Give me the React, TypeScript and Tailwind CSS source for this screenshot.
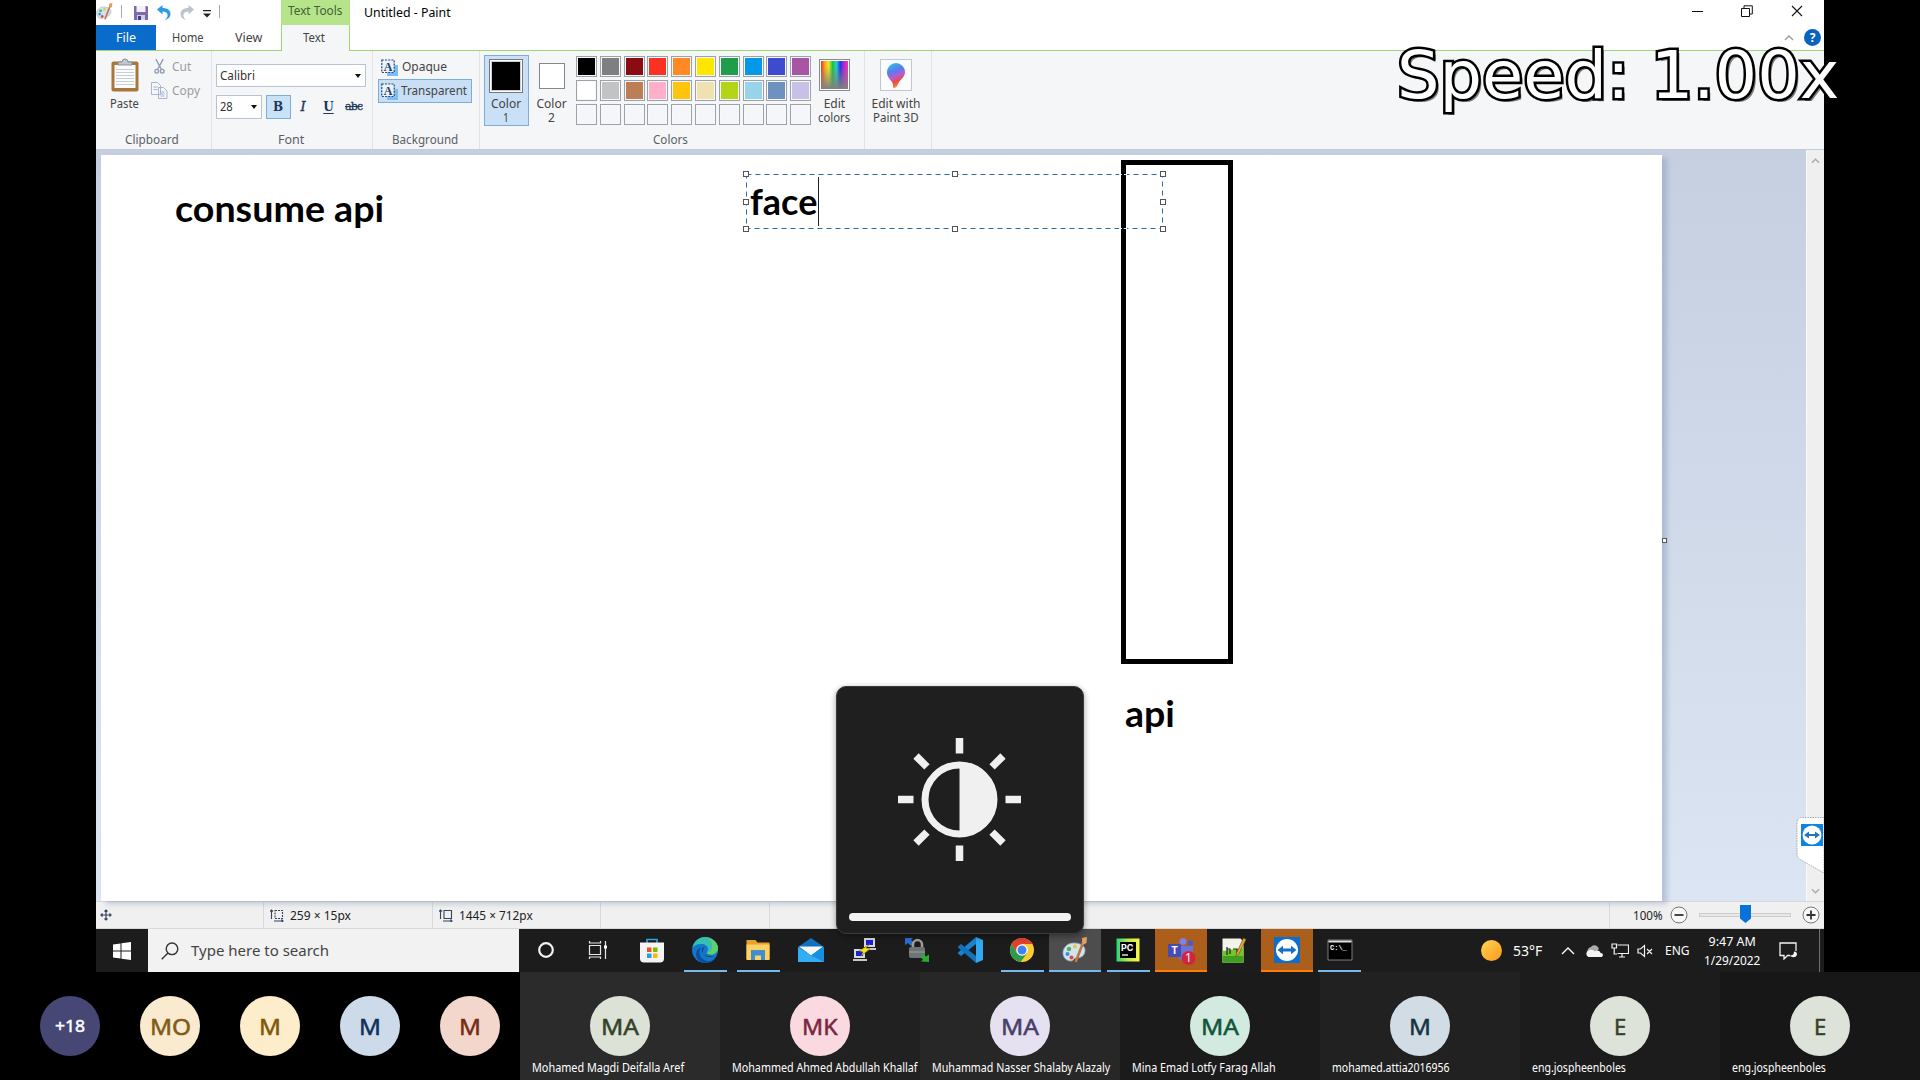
import React, { useLayoutEffect, useRef, useState } from "react";

/* A single line of text condensed or widened to an exact width. */
function Fit({ w, className = "", children }: { w: number; className?: string; children: string }) {
  const ref = useRef<HTMLSpanElement>(null);
  const [scale, setScale] = useState(1);
  useLayoutEffect(() => {
    if (ref.current && ref.current.offsetWidth) {
      setScale(w / ref.current.offsetWidth);
    }
  }, []);
  return (
    <span className={"block shrink-0 whitespace-nowrap " + className} style={{ width: w }}>
      <span ref={ref} className="inline-block origin-left" style={{ transform: `scaleX(${scale})` }}>
        {children}
      </span>
    </span>
  );
}

const paletteRows = [
  ["bg-black", "bg-[#7f7f7f]", "bg-[#8a0b14]", "bg-[#fb3123]", "bg-[#ff8a24]", "bg-[#ffe600]", "bg-[#1f9d4b]", "bg-[#0597ea]", "bg-[#3f4bcf]", "bg-[#a855a4]"],
  ["bg-white", "bg-[#c3c3c3]", "bg-[#bc7e55]", "bg-[#ffb0c8]", "bg-[#ffc40c]", "bg-[#efe2b0]", "bg-[#b4d517]", "bg-[#97d4ea]", "bg-[#6e91c0]", "bg-[#c8c0e7]"],
  Array(10).fill("bg-[#f4f6f9]"),
];

function PaintIcon({ className }: { className: string }) {
  return (
    <svg viewBox="0 0 26 26" className={className}>
      <path d="M12 6C5 6 1 11 1 16c0 5 4 8 8 8 3 0 2-3 5-3 6 0 9-3 9-8 0-4-5-7-11-7z" fill="#cfe3f0" stroke="#8fb4cc" strokeWidth=".8" />
      <circle cx="7" cy="12" r="2.200" fill="#58b04e" />
      <circle cx="13" cy="9.500" r="2" fill="#f0c53a" />
      <circle cx="5.500" cy="17" r="2" fill="#3b8edb" />
      <circle cx="9.500" cy="20.500" r="2" fill="#e0473c" />
      <path d="M22.500 2 14 24" stroke="#c1763a" strokeWidth="2.600" strokeLinecap="round" />
      <path d="M20 1l5-1-.5 6-4 2z" fill="#e0a163" />
    </svg>
  );
}

function TeamViewerIcon({ className }: { className: string }) {
  return (
    <svg viewBox="0 0 26 26" className={className}>
      <rect width="26" height="26" fill="#0b6fcf" />
      <circle cx="13" cy="13" r="11" fill="#fff" />
      <path d="M3.500 13 9 8.800v2.800h8V8.800l5.500 4.200-5.500 4.200v-2.800H9v2.800z" fill="#1570c8" />
    </svg>
  );
}

function Caret({ className = "" }: { className?: string }) {
  return <svg viewBox="0 0 6 4" className={"h-1 w-1.5 " + className}><path d="M0 0h6L3 4z" fill="#111" /></svg>;
}

function TitleBar() {
  return (
    <div className="flex h-[25px] bg-white">
      <div className="flex w-[185px] items-start pt-[3px]">
        <PaintIcon className="h-[17px] w-[17px]" />
        <i className="mt-[2px] ml-[8px] h-[13px] w-px bg-[#a8a8a8]" />
        <svg viewBox="0 0 16 16" className="mt-[2px] ml-[11px] h-4 w-4">
          <path d="M1 1h13l1 1v13H1z" fill="#7d69ad" /><path d="M3.500 1h9v6h-9z" fill="#f3f0fa" /><path d="M4 10h8v5H4z" fill="#d5cce9" /><path d="M5 11h3v4H5z" fill="#4b3a80" />
        </svg>
        <svg viewBox="0 0 14 15" className="mt-[2px] ml-[8px] h-[15px] w-[14px]">
          <path d="M0 4.500 5.500 0v3C10 3 13.500 5 13.500 9c0 3-2 5-5.500 6 2-2 3-3.500 2.500-5.500C10 7.200 8 6.500 5.500 6.500v3z" fill="#2b9be6" />
        </svg>
        <svg viewBox="0 0 14 15" className="mt-[2px] ml-[9px] h-[15px] w-[14px]">
          <path d="M14 4.500 8.500 0v3C4 3 .5 5 .5 9c0 3 2 5 5.500 6-2-2-3-3.500-2.500-5.500C4 7.200 6 6.500 8.500 6.500v3z" fill="#bcc3cd" />
        </svg>
        <svg viewBox="0 0 8 8" className="mt-[7px] ml-[9px] h-2 w-2"><path d="M0 0h8v1.300H0zM0 3.500h8L4 7.500z" fill="#222" /></svg>
        <i className="mt-[2px] ml-[8px] h-[13px] w-px bg-[#a8a8a8]" />
      </div>
      <div className="flex w-[69px] justify-center bg-[#b5e48b] pt-[2px] pr-px text-[12px] leading-[18px] text-[#456030]">
        <Fit w={54}>Text Tools</Fit>
      </div>
      <div className="pt-[4px] pl-[14px] text-[12.500px] leading-[18px] text-black"><Fit w={87}>Untitled - Paint</Fit></div>
      <div className="ml-auto flex gap-[38px] pt-[5px] pr-[21px]">
        <svg viewBox="0 0 11 12" className="h-3 w-[11px]"><path d="M0 6.500h11" stroke="#111" /></svg>
        <svg viewBox="0 0 12 12" className="h-3 w-3" fill="none" stroke="#111"><path d="M.5 3.500h8v8h-8zM3 3V.8h8.300V9H9" /></svg>
        <svg viewBox="0 0 12 12" className="h-3 w-3"><path d="m1 1 10 10M11 1 1 11" stroke="#111" strokeWidth="1.100" /></svg>
      </div>
    </div>
  );
}

function Tabs() {
  return (
    <div className="flex h-[26px] border-b border-[#9ed57a] bg-white text-[12.500px] leading-[25px] text-[#444]">
      <div className="flex h-[25px] w-[60px] justify-center bg-[#0a6cca] text-white"><Fit w={20}>File</Fit></div>
      <div className="ml-[16px]"><Fit w={32}>Home</Fit></div>
      <div className="ml-[31px]"><Fit w={27}>View</Fit></div>
      <div className="ml-[19px] flex h-[26px] w-[69px] justify-center border-x border-[#9ed57a] bg-[#f5f6f8] pr-[3px]"><Fit w={22}>Text</Fit></div>
      <div className="ml-auto flex items-center gap-[10px] pr-[3px]">
        <svg viewBox="0 0 10 6" className="h-1.5 w-[10px]"><path d="m1 5 4-4 4 4" fill="none" stroke="#999" strokeWidth="1.300" /></svg>
        <div className="flex h-[17px] w-[17px] items-center justify-center rounded-full bg-[#0b62c1] text-[12px] leading-[14px] font-bold text-white">?</div>
      </div>
    </div>
  );
}

function Group({ className, label, labelWidth, children }: { className: string; label?: string; labelWidth?: number; children: React.ReactNode }) {
  return (
    <div className={"flex h-[98px] shrink-0 flex-col " + className}>
      <div className="h-[80px]">{children}</div>
      {label && <div className="flex justify-center pr-[3px] leading-[17px] text-[#5c6066]"><Fit w={labelWidth!}>{label}</Fit></div>}
    </div>
  );
}

function TextBgIcon() {
  return (
    <svg viewBox="0 0 17 17" className="h-[17px] w-[17px]">
      <path d="M6 6h11v11H6z" fill="#7ebcf7" />
      <path d="M.8 1h12.400v12.500H.8z" fill="#e9f3fc" stroke="#2c466b" strokeWidth="1.200" strokeDasharray="2 1.200" />
      <text x="7" y="11.500" textAnchor="middle" className="font-['Liberation_Serif'] text-[12px] font-bold" fill="#243c61">A</text>
    </svg>
  );
}

function Ribbon() {
  return (
    <div className="flex h-[98px] bg-[#f5f6f8] text-[12px] text-[#444]">
      <Group className="w-[116px] border-r border-[#e0e2e6]" label="Clipboard" labelWidth={54}>
        <div className="flex">
          <div className="flex w-[57px] flex-col pt-[7px] pl-[15px]">
            <svg viewBox="0 0 28 34" className="h-[34px] w-[28px]">
              <rect x=".5" y="3.500" width="27" height="30" rx="2" fill="#a9773c" />
              <path d="M3.500 7h21v23h-21z" fill="#fbfcfd" />
              <path d="M5 11.500h18M5 14.500h18M5 17.500h18M5 20.500h18M5 23.500h18M5 26.500h18" stroke="#c8cdd4" />
              <path d="M7 7V4h4a3 3 0 0 1 6 0h4v3z" fill="#c4c8ce" stroke="#7b8087" strokeWidth=".8" />
            </svg>
            <div className="-ml-px pt-[3px] leading-[17px]"><Fit w={29}>Paste</Fit></div>
          </div>
          <div className="pt-[7px] text-[#9a9da1]">
            <div className="flex h-[17px] items-center">
              <svg viewBox="0 0 12 17" className="ml-px h-[17px] w-[11px]" fill="none" stroke="#8f9db4" strokeWidth="1.500"><path d="m2 .5 6 11M10 .5 4 11.500" /><circle cx="3" cy="13.700" r="2" /><circle cx="9" cy="13.700" r="2" /></svg>
              <div className="pl-[7px]"><Fit w={19}>Cut</Fit></div>
            </div>
            <div className="mt-[7px] flex h-[17px] items-center">
              <svg viewBox="0 0 17 17" className="-ml-[2px] h-[17px] w-[17px]" fill="#f4f7fb" stroke="#a8b5ca"><path d="M.5.5h6l3 3v9h-9zM7.500 5.500h5l3.500 3.500v7.500H7.500z" /><path d="M2.500 5h4M2.500 7.500h4M9.500 10h4M9.500 12h4M9.500 14h4" /></svg>
              <div className="pl-[4px]"><Fit w={28}>Copy</Fit></div>
            </div>
          </div>
        </div>
      </Group>
      <Group className="w-[161px] border-r border-[#e0e2e6]" label="Font" labelWidth={26}>
        <div className="px-[4px] pt-[13px]">
          <div className="flex h-[23px] w-[150px] items-center justify-between border border-[#b9c3d6] bg-white pr-[4px] pl-[3px] text-[#333]"><Fit w={35}>Calibri</Fit><Caret /></div>
          <div className="mt-[8px] flex h-6 items-center text-[#22375b]">
            <div className="flex h-6 w-[46px] items-center justify-between border border-[#b9c3d6] bg-white pr-[4px] pl-[3px] text-[#333]"><Fit w={13}>28</Fit><Caret /></div>
            <div className="ml-[4px] flex h-6 w-[25px] items-center justify-center border border-[#7eadd8] bg-[#cae2f8] pr-px font-['DejaVu_Serif'] text-[12px] font-bold">B</div>
            <div className="w-[24px] text-center font-['DejaVu_Serif'] text-[13px] italic [-webkit-text-stroke:0.4px]">I</div>
            <div className="w-[27px] text-center font-['DejaVu_Serif'] text-[12px] font-bold underline underline-offset-2">U</div>
            <div className="ml-[3px] font-['DejaVu_Serif'] text-[11px] tracking-[-0.800px] line-through [-webkit-text-stroke:0.3px]">abc</div>
          </div>
        </div>
      </Group>
      <Group className="w-[107px] border-r border-[#e0e2e6]" label="Background" labelWidth={66}>
        <div className="pt-[4px] pl-[5px]">
          <div className="flex h-6 items-center pl-[3px]"><TextBgIcon /><div className="pl-[4px]"><Fit w={45}>Opaque</Fit></div></div>
          <div className="flex h-6 w-[94px] items-center border border-[#7eadd8] bg-[#c9dff6] pl-[2px]"><TextBgIcon /><div className="pl-[3px]"><Fit w={66}>Transparent</Fit></div></div>
        </div>
      </Group>
      <Group className="w-[385px] border-r border-[#e0e2e6]" label="Colors" labelWidth={35}>
        <div className="flex pl-[4px] leading-[14px]">
          <div className="mt-[4px] flex h-[71px] w-[45px] flex-col items-center border border-[#7eadd8] bg-[#c9e0f7] pt-[3px] pr-px">
            <div className="mb-[4px] h-[34px] w-[34px] border border-[#777] bg-white p-px"><div className="h-full border border-[#ccd] bg-black" /></div>
            <Fit w={30}>Color</Fit><Fit w={6}>1</Fit>
          </div>
          <div className="flex w-[46px] flex-col items-center pt-[12px] pr-px">
            <div className="mb-[8px] h-[26px] w-[26px] border border-[#888] bg-white" />
            <Fit w={30}>Color</Fit><Fit w={7}>2</Fit>
          </div>
          <div className="ml-px flex flex-col gap-[3px] pt-[5px]">
            {paletteRows.map((row, r) => (
              <div key={r} className="flex gap-[2.800px]">
                {row.map((c: string, i: number) => (
                  <div key={i} className="h-[21px] w-[21px] border border-[#9da1a8] bg-[#f7f8fa] p-px"><div className={"h-full " + c} /></div>
                ))}
              </div>
            ))}
          </div>
          <div className="flex w-[46px] flex-col items-center pt-[8px]">
            <div className="mb-[6px] h-[32px] w-[31px] border border-[#8a8a8a] bg-white p-px">
              <div className="h-full bg-[linear-gradient(to_right,#e33,#f7a61b,#e9ea28,#22c13b,#22cfd0,#2735da,#b527df,#ed3a97)]"><div className="h-full bg-linear-to-b from-transparent from-20% to-[#808080]" /></div>
            </div>
            <Fit w={21}>Edit</Fit><Fit w={32}>colors</Fit>
          </div>
        </div>
      </Group>
      <Group className="w-[67px] border-r border-[#e0e2e6]">
        <div className="flex flex-col items-center pt-[8px] pr-[4px] leading-[14px]">
          <div className="mb-[6px] flex h-[32px] w-[32px] items-center justify-center border border-[#c3c6ca] bg-[#fafbfc]">
            <svg viewBox="0 0 20 27" className="h-[27px] w-5">
              <defs><linearGradient id="drop" x1=".2" y1="0" x2=".5" y2="1"><stop offset="0" stopColor="#27c4ea" /><stop offset=".35" stopColor="#5c7bea" /><stop offset=".58" stopColor="#b65bd0" /><stop offset=".78" stopColor="#ee4a3c" /><stop offset="1" stopColor="#ff9c2b" /></linearGradient></defs>
              <path d="M10 1a9 9 0 0 1 9 9c0 5-4 7-6 10-1 2-2 6-5 6-2 0 0-3-2-6S1 15 1 10a9 9 0 0 1 9-9z" fill="url(#drop)" />
            </svg>
          </div>
          <Fit w={49}>Edit with</Fit><Fit w={46}>Paint 3D</Fit>
        </div>
      </Group>
    </div>
  );
}

const handlePositions = [
  "-left-[3px] -top-[3px]", "left-[206px] -top-[3px]", "-right-[3px] -top-[3px]",
  "-left-[3px] top-[25px]", "-right-[3px] top-[25px]",
  "-left-[3px] -bottom-[3px]", "left-[206px] -bottom-[3px]", "-right-[3px] -bottom-[3px]",
];

function Workspace() {
  return (
    <div className="flex h-[752px] border-t border-[#c3cad8] bg-linear-to-b from-[#c6cfe0] to-[#dbe5f3]">
      <div className="relative mt-[5px] ml-[5px] h-[746px] w-[1561px] bg-white font-[Lato] text-[36px] leading-[44px] font-bold text-black shadow-[5px_3px_5px_rgba(110,130,165,0.35)]">
        <div className="absolute top-[31px] left-[74px]"><Fit w={209}>consume api</Fit></div>
        <div className="absolute top-[5px] left-[1020px] h-[504px] w-[112px] border-[5px] border-black" />
        <div className="absolute top-[536px] left-[1024px]"><Fit w={50}>api</Fit></div>
        <div className="absolute top-[19px] left-[645px] h-[55px] w-[417px]">
          <svg viewBox="0 0 417 55" className="absolute inset-0 h-full w-full" fill="none">
            <rect x=".5" y=".5" width="416" height="54" stroke="#2f6a9f" strokeDasharray="5 4" />
            <path d="M373 .5h8M373 54.500h8" stroke="#e8f2fa" strokeDasharray="3 2" />
          </svg>
          <div className="absolute top-[5px] left-[4px]"><Fit w={67}>face</Fit></div>
          <div className="absolute top-[3px] left-[72px] h-[49px] w-px bg-[#222]" />
          {handlePositions.map((p) => <div key={p} className={"absolute h-[6px] w-[6px] border border-[#555] bg-white " + p} />)}
        </div>
        <div className="absolute top-[383px] -right-[5px] h-[5px] w-[5px] border border-[#555] bg-white" />
      </div>
      <div className="ml-auto flex w-[18px] flex-col items-center justify-between border-l border-[#fafafa] bg-[#efefef] py-[6px]">
        <svg viewBox="0 0 10 7" className="mt-px h-[7px] w-[9px]"><path d="m1 6 4-4 4 4" fill="none" stroke="#aaa" strokeWidth="1.600" /></svg>
        <svg viewBox="0 0 10 7" className="h-[7px] w-[9px]"><path d="m1 1 4 4 4-4" fill="none" stroke="#aaa" strokeWidth="1.600" /></svg>
      </div>
    </div>
  );
}

function StatusBar() {
  return (
    <div className="flex h-[28px] border-y border-[#d8d8d8] bg-[#f0f0f0] text-[12px] leading-[27px] text-[#222]">
      <div className="flex w-[168px] items-center border-r border-[#d8dadd] pl-[4px]">
        <svg viewBox="0 0 12 12" className="h-3 w-3" fill="none" stroke="#33445f" strokeWidth="1.200"><path d="M6 1v10M1 6h10M4.500 2.500 6 1l1.500 1.500M4.500 9.500 6 11l1.500-1.500M2.500 4.500 1 6l1.500 1.500M9.500 4.500 11 6 9.500 7.500" /></svg>
      </div>
      <div className="flex w-[169px] items-center border-r border-[#d8dadd] pl-[6px]">
        <svg viewBox="0 0 14 13" className="h-[13px] w-[14px]" fill="none" stroke="#33445f" strokeWidth="1.100"><path d="M1.500 10V1M0 2.500 1.500 1 3 2.500M4 12h9M11.500 10.500 13 12l-1.500 1.500" /><path d="M5 1.500h7.500v8H5z" strokeDasharray="2 1" /></svg>
        <div className="pl-[6px]"><Fit w={61}>259 × 15px</Fit></div>
      </div>
      <div className="flex w-[168px] items-center border-r border-[#d8dadd] pl-[6px]">
        <svg viewBox="0 0 14 13" className="h-[13px] w-[14px]" fill="none" stroke="#33445f" strokeWidth="1.100"><path d="M1.500 10V1M0 2.500 1.500 1 3 2.500M4 12h9M11.500 10.500 13 12l-1.500 1.500M5 1.500h7.500v8H5z" /></svg>
        <div className="pl-[6px]"><Fit w={74}>1445 × 712px</Fit></div>
      </div>
      <div className="w-[169px] border-r border-[#d8dadd]" />
      <div className="w-[840px] border-r border-[#d8dadd]" />
      <div className="flex flex-1 items-center pl-[23px]">
        <Fit w={30}>100%</Fit>
        <svg viewBox="0 0 18 18" className="ml-[7px] h-[18px] w-[18px]"><circle cx="9" cy="9" r="8" fill="#f8f8f8" stroke="#777" /><path d="M4.500 9h9" stroke="#333" strokeWidth="1.800" /></svg>
        <div className="relative ml-[11px] h-[4px] w-[92px] border border-[#ccc] bg-[#e7e7e7]">
          <svg viewBox="0 0 11 18" className="absolute -top-[9px] left-[40px] h-[18px] w-[11px]"><path d="M0 0h11v13.500L5.500 18 0 13.500z" fill="#0873d6" /></svg>
        </div>
        <svg viewBox="0 0 18 18" className="ml-[11px] h-[18px] w-[18px]"><circle cx="9" cy="9" r="8" fill="#f8f8f8" stroke="#777" /><path d="M4.500 9h9M9 4.500v9" stroke="#333" strokeWidth="1.800" /></svg>
      </div>
    </div>
  );
}

const taskIcons: { cell?: string; bar?: string; icon: React.ReactNode }[] = [
  { icon: <circle cx="13" cy="13" r="6.800" fill="none" stroke="#f2f2f2" strokeWidth="2.200" /> },
  { icon: <g fill="none" stroke="#e8e8e8" strokeWidth="1.200"><path d="M3.500 8.500h11v9h-11zM3.500 4v2h11V4M3.500 22v-2h11v2M19.500 4v18" /><path d="M18 8.500h3v3h-3z" fill="#fff" stroke="none" /></g> },
  { icon: <g><path d="M8 6V2.500h10V6" fill="none" stroke="#2fa4e6" strokeWidth="1.600" /><path d="M1 5.500h24v16a4 4 0 0 1-4 4H5a4 4 0 0 1-4-4z" fill="#f4f4f4" /><path d="M8 10.500h4.500V15H8z" fill="#ef5329" /><path d="M14 10.500h4.500V15H14z" fill="#7fba00" /><path d="M8 16.500h4.500V21H8z" fill="#20a2e8" /><path d="M14 16.500h4.500V21H14z" fill="#fdb900" /></g> },
  { bar: "w-[43px] bg-[#76b9ed]", icon: <g><circle cx="13" cy="13" r="13" fill="#1276c9" /><path d="M.5 11C2 4 7 0 13 0c8 0 13 6 13 11 0 4-3 6.500-7 6.500-3 0-4-1-4-2s1-1.500 1-3.500c0-3-3-5-6.500-5C5 7 2 8.500.5 11z" fill="#37bfb3" /><path d="M15 1c7 1 11 6 11 10 0 4-3 6.500-7 6.500-3 0-4-1-4-2 3 0 5-2 5-6C20 5 18 2 15 1z" fill="#63cf69" /><path d="M9.500 10.500C6 13 7 21 13 23.500c4 1.500 8 0 10-1.500-5 6-15 5-18-1-2.500-5 .5-10 4.500-10.500z" fill="#0c4f9f" /><path d="M13 10a3.500 3.500 0 0 0-2 6c1.500 3 6 4.500 12 3-5 2-10 1-12-3-1-3 0-5 2-6z" fill="#1e1f22" /></g> },
  { bar: "w-[43px] bg-[#76b9ed]", icon: <g><path d="M1.500 3h9l2 2.500h12V22h-23z" fill="#e6a22b" /><path d="M1.500 7.500h23V23h-23z" fill="#ffd163" /><path d="M6 13h14v10h-4v-4.500h-6V23H6z" fill="#3f8ed0" /></g> },
  { icon: <g><path d="M0 10 13 1l13 9v15H0z" fill="#1271bd" /><path d="M2 10h22L13 18.500z" fill="#f4f8fb" /><path d="M0 10l13 8.500L26 10v15H0z" fill="#33aef2" /><path d="M13 18.500 26 25V10z" fill="#1a8ee0" /><path d="M1 9.500h24L13 17.500z" fill="#f4f8fb" /></g> },
  { icon: <g><path d="M13 1h11v9H13z" fill="#d7d9dc" /><path d="M15 3h7v5h-7z" fill="#1b1edb" /><path d="M12 11h13v2H12zM2 22h14v2H2z" fill="#c9c9c9" /><path d="M3 12h11v9H3z" fill="#d7d9dc" /><path d="M5 14h7v5H5z" fill="#1b1edb" /><path d="m19 7-11 7 4 1-2 4 9-7-4-1z" fill="#f6e41a" stroke="#666200" strokeWidth=".5" /></g> },
  { icon: <g><path d="M1 1h8L7 3l3 3-3 3-3-3-3 2z" fill="#2a6fd0" /><path d="M9 11V7.500a4.500 4.500 0 0 1 9 0V11" fill="none" stroke="#9e9e9e" strokeWidth="2.500" /><rect x="5" y="10" width="16" height="11" rx="2" fill="#707376" /><path d="M5 15h16" stroke="#95989b" strokeWidth="1.200" /><path d="m25 25-8-.5 2-2-3-3 3-3 3 3 3-2z" fill="#2aab35" /></g> },
  { icon: <g><path d="M19 0 26 3v20l-7 3z" fill="#31a8f0" /><path d="M19 0v7L4 19l-3-2.500v-1z" fill="#1784d0" /><path d="M19 26v-7L4 7 1 9.500v1z" fill="#1173bd" /></g> },
  { bar: "w-[43px] bg-[#76b9ed]", icon: <g><circle cx="13" cy="13" r="12" fill="#fccb32" /><path d="M13 7h10.400A12 12 0 0 0 2.600 7l5.200 9z" fill="#e3402f" /><path d="M2.600 7a12 12 0 0 0 9 17.900L18.200 16H7.800z" fill="#2a9c4a" /><circle cx="13" cy="13" r="5.800" fill="#fff" /><circle cx="13" cy="13" r="4.500" fill="#3f81ee" /></g> },
  { cell: "bg-[#4d4d4d]", bar: "w-full bg-[#76b9ed]", icon: null },
  { bar: "w-[43px] bg-[#76b9ed]", icon: <g><defs><linearGradient id="pc"><stop stopColor="#2bd283" /><stop offset=".5" stopColor="#b9ea47" /><stop offset="1" stopColor="#fcf84a" /></linearGradient></defs><path d="M1.500 1.500h23v23h-23z" fill="url(#pc)" /><path d="M5 5h16v16H5z" fill="#000" /><text x="6" y="13.500" className="font-[Inter] text-[9px] font-bold" fill="#fff">PC</text><path d="M7 18h6" stroke="#fff" strokeWidth="1.300" /></g> },
  { cell: "bg-[#ac5f1b]", bar: "w-full bg-[#ff7d0b]", icon: <g><circle cx="15" cy="4.500" r="3.500" fill="#7b83eb" /><circle cx="22.500" cy="6" r="2.800" fill="#5059c9" /><path d="M10 9h15v9a7 7 0 0 1-7 7c-5 0-8-3-8-7z" fill="#6b72d8" /><rect y="7" width="13" height="13" rx="1" fill="#454cb4" /><text x="6.500" y="17" textAnchor="middle" className="font-[Inter] text-[10px] font-bold" fill="#fff">T</text><circle cx="20.500" cy="21" r="7" fill="#d5233b" /><text x="20.500" y="25.200" textAnchor="middle" className="font-['Noto_Sans'] text-[12px]" fill="#fff">1</text></g> },
  { icon: <g><path d="M1.500 1.500h18l3 3v21h-21z" fill="#f0f4ea" /><path d="M1.500 14l21-3v14.500h-21z" fill="#72c52d" /><path d="M1.500 19h21v6.500h-21z" fill="#3f9f23" /><path d="M6 10v8M6 12h3v5M12 12h4v5" stroke="#222" strokeWidth="1.200" fill="none" /><path d="m22.500 1-7 15-.5 3.500 2.500-2L25 2.500z" fill="#e7a62c" stroke="#68471b" strokeWidth=".6" /></g> },
  { cell: "bg-[#ac5f1b]", bar: "w-full bg-[#ff7d0b]", icon: null },
  { bar: "w-[43px] bg-[#76b9ed]", icon: <g><path d="M1 3h24v20H1z" fill="#000" stroke="#8b8b8b" strokeWidth=".9" /><path d="M1.500 3.500h23v2h-23z" fill="#e1e1e1" /><text x="3" y="12.500" className="font-['Liberation_Mono'] text-[7px] font-bold" fill="#fff">C:\_</text></g> },
];

function Taskbar() {
  return (
    <div className="flex h-[43px] bg-[#1c1c1c] text-white">
      <div className="flex w-[52px] items-center justify-center">
        <svg viewBox="0 0 18 18" className="h-[18px] w-[18px]" fill="#fff"><path d="M0 2.600 7.500 1.500v7H0zM8.500 1.300 18 0v8.500H8.500zM0 9.500h7.500v7L0 15.400zM8.500 9.500H18V18l-9.500-1.300z" /></svg>
      </div>
      <div className="flex w-[371px] items-center bg-[#f2f2f2] pl-[13px] text-[15px] text-[#444]">
        <svg viewBox="0 0 18 18" className="h-[18px] w-[18px]" fill="none" stroke="#333" strokeWidth="1.400"><circle cx="11" cy="6.800" r="5.800" /><path d="m7 11-6.300 6.300" /></svg>
        <div className="pl-[12px]"><Fit w={138}>Type here to search</Fit></div>
      </div>
      <div className="flex pl-px">
        {taskIcons.map((t, i) => (
          <div key={i} className="flex h-[43px] w-[52.900px] justify-center px-[0.500px]">
            <div className={"flex w-full flex-col items-center " + (t.cell ?? "")}>
              <div className="flex h-[41px] items-center">
                {i === 10 ? <PaintIcon className="h-[26px] w-[26px]" /> : i === 14 ? <TeamViewerIcon className="h-[26px] w-[26px]" /> : <svg viewBox="0 0 26 26" className="h-[26px] w-[26px] overflow-visible">{t.icon}</svg>}
              </div>
              {t.bar && <div className={"h-[2px] " + t.bar} />}
            </div>
          </div>
        ))}
      </div>
      <div className="ml-auto flex items-center text-[13px]">
        <div className="h-[21px] w-[21px] rounded-full bg-linear-to-br from-[#ffd34f] to-[#fb9817]" />
        <div className="ml-[11px]"><Fit w={29} className="text-[14px]">53°F</Fit></div>
        <svg viewBox="0 0 14 8" className="ml-[19px] h-2 w-[14px]" fill="none" stroke="#fff" strokeWidth="1.400"><path d="m1 7 6-6 6 6" /></svg>
        <svg viewBox="0 0 18 12" className="ml-[10px] h-3 w-[18px]"><path d="M3 8a4 4 0 0 1 3-6c2-3 7-2 8 2l-6 5z" fill="#aaa" /><path d="M3.500 12a3.500 3.500 0 0 1 0-6.500C6 4 9 5 9.500 6.500c2-2 6-1 6 1.500 3.500 0 3 4 0 4z" fill="#f4f4f4" /></svg>
        <svg viewBox="0 0 18 15" className="ml-[8px] h-[15px] w-[18px]" fill="none" stroke="#f2f2f2" strokeWidth="1.200"><path d="M6.500 2h11v8.500h-11M8 14h6M11 10.500V14M1 1h4.500v4H1zM3.200 5v6H6" /></svg>
        <svg viewBox="0 0 16 14" className="ml-[8px] h-[14px] w-[16px]" fill="none" stroke="#f2f2f2" strokeWidth="1.200"><path d="M1 5h2.500L7.500 1.500v11L3.500 9H1zM10 5l5 5M15 5l-5 5" /></svg>
        <div className="ml-[12px]"><Fit w={25}>ENG</Fit></div>
        <div className="ml-[14px] flex w-[56px] flex-col items-center text-[12.500px] leading-[19px]"><Fit w={47}>9:47 AM</Fit><Fit w={56}>1/29/2022</Fit></div>
        <svg viewBox="0 0 18 18" className="ml-[19px] h-[18px] w-[18px]" fill="none" stroke="#f2f2f2" strokeWidth="1.300"><path d="M17 9V1H1v12.500h4V17l3.500-3.500H11" /><path d="M15 9.500c0 3-1.500 4-4 4 1 2 6 3 7-1 0-2-1-3-3-3z" fill="#f2f2f2" stroke="none" /></svg>
        <i className="mr-[4px] ml-[22px] h-[43px] w-px bg-[#707070]" />
      </div>
    </div>
  );
}

const tiles = [
  { tile: "bg-[#2b2b2b]", dot: "bg-[#dce2d6] text-[#36412a]", initials: "MA", iw: 38, name: "Mohamed Magdi Deifalla Aref", w: 152 },
  { tile: "bg-[#212121]", dot: "bg-[#fad9e0] text-[#7a2740]", initials: "MK", iw: 36, name: "Mohammed Ahmed Abdullah Khallaf", w: 186 },
  { tile: "bg-[#272727]", dot: "bg-[#e6e1f0] text-[#474068]", initials: "MA", iw: 38, name: "Muhammad Nasser Shalaby Alazaly", w: 178 },
  { tile: "bg-[#1b1b1b]", dot: "bg-[#d2eadf] text-[#14543b]", initials: "MA", iw: 38, name: "Mina Emad Lotfy Farag Allah", w: 144 },
  { tile: "bg-[#212121]", dot: "bg-[#d2dce4] text-[#16343f]", initials: "M", iw: 22, name: "mohamed.attia2016956", w: 118 },
  { tile: "bg-[#1c1c1c]", dot: "bg-[#dde3d8] text-[#36412a]", initials: "E", iw: 12, name: "eng.jospheenboles", w: 94 },
  { tile: "bg-[#171717]", dot: "bg-[#dde3d8] text-[#36412a]", initials: "E", iw: 12, name: "eng.jospheenboles", w: 94 },
];

const overflow = [
  { dot: "bg-[#464775] text-white text-[17px]", initials: "+18", iw: 30 },
  { dot: "bg-[#faebd0] text-[#835b15] text-[22px]", initials: "MO", iw: 41 },
  { dot: "bg-[#fdedcb] text-[#80580c] text-[22px]", initials: "M", iw: 22 },
  { dot: "bg-[#cddaea] text-[#12305a] text-[22px]", initials: "M", iw: 22 },
  { dot: "bg-[#f3d7cd] text-[#782b17] text-[22px]", initials: "M", iw: 22 },
];

function Participants() {
  return (
    <div className="flex h-[108px] bg-black">
      <div className="flex w-[520px] gap-[40px] pt-[24px] pl-[40px]">
        {overflow.map((o, i) => (
          <div key={i} className={"flex h-[60px] w-[60px] items-center justify-center rounded-full [-webkit-text-stroke:0.500px] " + o.dot}><Fit w={o.iw}>{o.initials}</Fit></div>
        ))}
      </div>
      {tiles.map((t, i) => (
        <div key={i} className={"flex w-[200px] flex-col overflow-hidden pt-[24px] " + t.tile}>
          <div className={"flex h-[60px] w-[60px] shrink-0 items-center justify-center self-center rounded-full text-[22px] [-webkit-text-stroke:0.500px] " + t.dot}><Fit w={t.iw}>{t.initials}</Fit></div>
          <div className="pt-[4px] pl-[12px] text-[12px] leading-[16px] text-white"><Fit w={t.w}>{t.name}</Fit></div>
        </div>
      ))}
    </div>
  );
}

function BrightnessOverlay() {
  return (
    <div className="absolute top-[686px] left-[836px] flex h-[248px] w-[248px] flex-col items-center rounded-[10px] border border-[#3a3a3a] bg-[#1f1f1f] shadow-[0_2px_6px_rgba(0,0,0,0.4)]">
      <svg viewBox="-61.500 -61.500 124 124" className="mt-[51px] h-[124px] w-[124px]">
        <g stroke="#f0f0f0" strokeWidth="7.500">
          {[0, 45, 90, 135, 180, 225, 270, 315].map((a) => <path key={a} d="M0-46V-61.500" transform={`rotate(${a})`} />)}
        </g>
        <circle r="34.500" fill="none" stroke="#f0f0f0" strokeWidth="7" />
        <path d="M0-35a35 35 0 0 1 0 70z" fill="#f0f0f0" />
      </svg>
      <div className="mt-[51px] h-[8px] w-[222px] rounded-full bg-[#f4f4f4]" />
    </div>
  );
}

export default function App() {
  return (
    <div className="relative h-[1080px] w-[1920px] overflow-hidden bg-black font-['Noto_Sans',sans-serif]">
      <div className="mx-[96px] h-[972px] w-[1728px]">
        <TitleBar />
        <Tabs />
        <Ribbon />
        <Workspace />
        <StatusBar />
        <Taskbar />
      </div>
      <Participants />
      <svg viewBox="0 0 28 57" className="absolute top-[817px] left-[1796px] h-[57px] w-[28px]">
        <path d="M28 .5H6Q1 1 1 6v31q0 4 4 6l23 13z" fill="#fff" stroke="#aaa" strokeDasharray="1.500 1" />
        <path d="M5 7h22v22H5z" fill="#0b84e3" /><circle cx="16" cy="18" r="9.500" fill="#fff" /><path d="m8 18 5-3.500V17h6v-2.500l5 3.500-5 3.500V19h-6v2.500z" fill="#2576bd" />
      </svg>
      <BrightnessOverlay />
      <div className="absolute top-[36px] left-[1397px] font-['DejaVu_Sans'] text-[66.500px] leading-[78px] text-white [-webkit-text-stroke:5px_black] [paint-order:stroke_fill] [text-shadow:3px_3px_0_rgba(0,0,0,0.500)]">
        <Fit w={442}>Speed: 1.00x</Fit>
      </div>
    </div>
  );
}
